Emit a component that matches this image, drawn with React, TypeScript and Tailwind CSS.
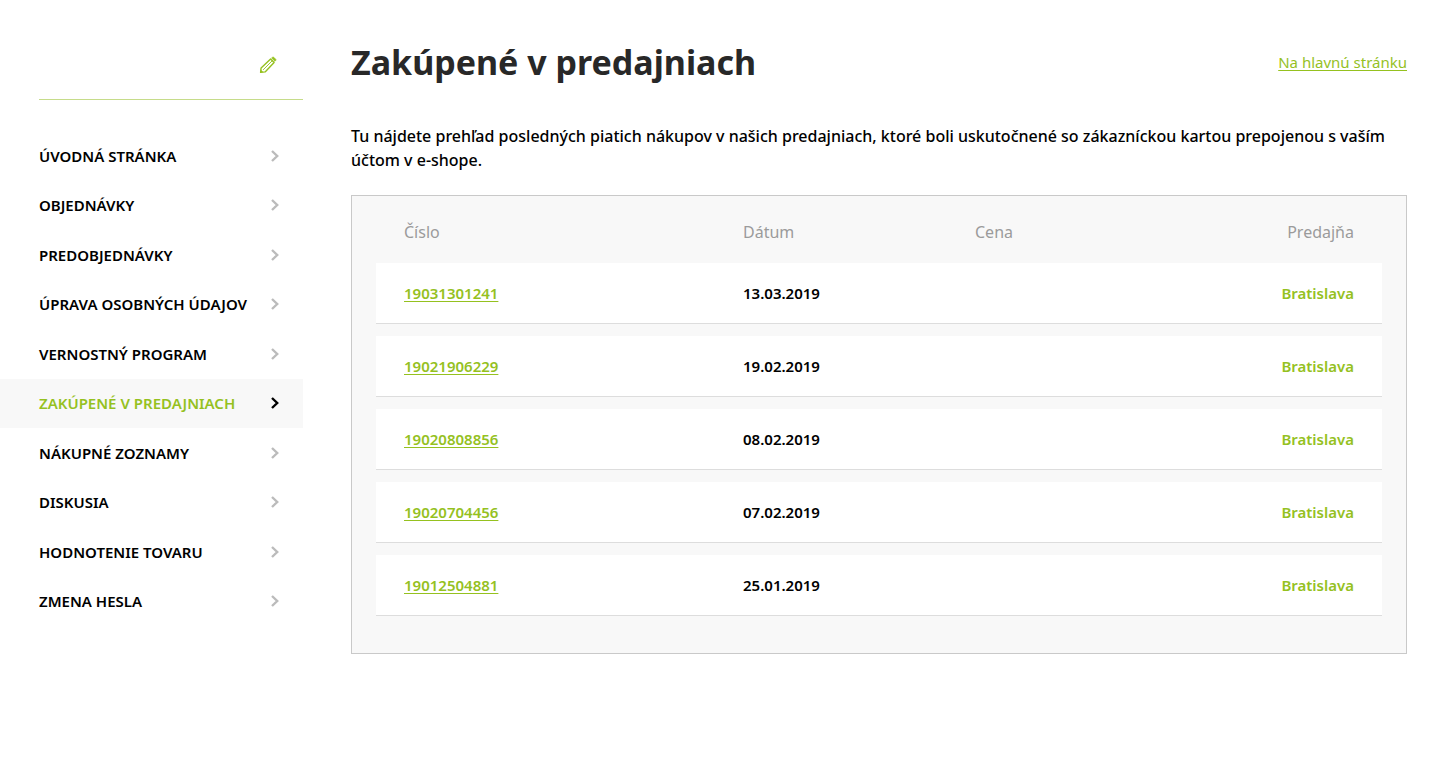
import React from "react";

const menu = [
  "Úvodná stránka",
  "Objednávky",
  "Predobjednávky",
  "Úprava osobných údajov",
  "Vernostný program",
  "Zakúpené v predajniach",
  "Nákupné zoznamy",
  "Diskusia",
  "Hodnotenie tovaru",
  "Zmena hesla",
];

const activeItem = "Zakúpené v predajniach";

const purchases = [
  { id: "19031301241", date: "13.03.2019", price: "", store: "Bratislava" },
  { id: "19021906229", date: "19.02.2019", price: "", store: "Bratislava" },
  { id: "19020808856", date: "08.02.2019", price: "", store: "Bratislava" },
  { id: "19020704456", date: "07.02.2019", price: "", store: "Bratislava" },
  { id: "19012504881", date: "25.01.2019", price: "", store: "Bratislava" },
];

function PencilIcon() {
  return (
    <svg width="18" height="18" viewBox="0 0 18 18" fill="none" stroke="currentColor" strokeWidth="1.4" strokeLinejoin="round" aria-hidden="true">
      <path d="M1.6 16.4 L2.1 11.9 L11.6 2.9 L15.1 6.4 L6.1 15.9 Z" />
      <path d="M4.1 13.9 L13.4 4.6" strokeWidth="0.9" />
      <path d="M1.4 16.6 L1.7 13.6 L4.4 16.3 Z" fill="currentColor" stroke="none" />
      <path d="M12.7 2 L13.7 1.2 Q14.2 0.9 14.7 1.3 L16.7 3.3 Q17.1 3.8 16.8 4.3 L16 5.3 Z" fill="currentColor" strokeWidth="0.8" />
    </svg>
  );
}

function Chevron() {
  return (
    <svg width="8" height="12" viewBox="0 0 8 12" fill="none" stroke="currentColor" strokeWidth="2.4" aria-hidden="true">
      <path d="M1 1 L6.2 6 L1 11" />
    </svg>
  );
}

function Sidebar() {
  return (
    <aside className="w-[303px] shrink-0">
      <div className="ml-[39px] flex h-[100px] items-start justify-end border-b border-[#c6dc8a] pt-14 pr-[26px]">
        <button type="button" aria-label="Upraviť" className="text-[#95c11f]">
          <PencilIcon />
        </button>
      </div>
      <nav className="mt-[31px]">
        <ul className="grid min-h-[495px] auto-rows-fr">
          {menu.map((item) => {
            const active = item === activeItem;
            return (
              <li key={item} className="flex">
                <a
                  href="#"
                  aria-current={active ? "page" : undefined}
                  className={
                    active
                      ? "flex grow items-center justify-between bg-[#f8f8f8] pr-6 pl-[39px] text-[15px] font-semibold text-[#95c11f] uppercase"
                      : "flex grow items-center justify-between pr-6 pl-[39px] text-[15px] font-semibold text-black uppercase"
                  }
                >
                  {item}
                  <span className={active ? "text-black" : "text-[#bbbbbb]"}>
                    <Chevron />
                  </span>
                </a>
              </li>
            );
          })}
        </ul>
      </nav>
    </aside>
  );
}

function PurchaseTable() {
  return (
    <div className="mt-[23px] border border-[#c9c9c9] bg-[#f8f8f8] px-6 pb-[25px]">
      <table className="w-full table-fixed border-separate border-spacing-x-0 border-spacing-y-3 text-left">
        <thead>
          <tr className="h-[43px] text-base text-[#9b9b9b]">
            <th className="w-[339px] px-7 pt-1 pb-0 font-normal">Číslo</th>
            <th className="w-[232px] px-7 pt-1 pb-0 font-normal">Dátum</th>
            <th className="px-7 pt-1 pb-0 font-normal">Cena</th>
            <th className="px-7 pt-1 pb-0 text-right font-normal">Predajňa</th>
          </tr>
        </thead>
        <tbody>
          {purchases.map((p) => (
            <tr key={p.id} className="h-[61px] text-[15px] font-semibold text-black">
              <td className="border-b border-[#dddddd] bg-white px-7 py-0">
                <a href="#" className="text-[#95c11f] underline underline-offset-2">
                  {p.id}
                </a>
              </td>
              <td className="border-b border-[#dddddd] bg-white px-7 py-0">{p.date}</td>
              <td className="border-b border-[#dddddd] bg-white px-7 py-0">{p.price}</td>
              <td className="border-b border-[#dddddd] bg-white px-7 py-0 text-right text-[#95c11f]">{p.store}</td>
            </tr>
          ))}
        </tbody>
      </table>
    </div>
  );
}

export default function App() {
  return (
    <div className="flex min-h-screen bg-white font-['Noto_Sans','Open_Sans',sans-serif]">
      <Sidebar />
      <main className="min-w-0 grow pr-[23px] pl-12">
        <header className="flex items-center justify-between pt-9">
          <h1 className="text-[34px] leading-[52px] font-bold text-[#282828]">Zakúpené v predajniach</h1>
          <a href="#" className="text-[15px] text-[#95c11f] underline underline-offset-2">
            Na hlavnú stránku
          </a>
        </header>
        <p className="mt-9 text-base leading-6 font-medium text-black">
          Tu nájdete prehľad posledných piatich nákupov v našich predajniach, ktoré boli uskutočnené so zákazníckou
          kartou prepojenou s vaším účtom v e-shope.
        </p>
        <PurchaseTable />
      </main>
    </div>
  );
}
